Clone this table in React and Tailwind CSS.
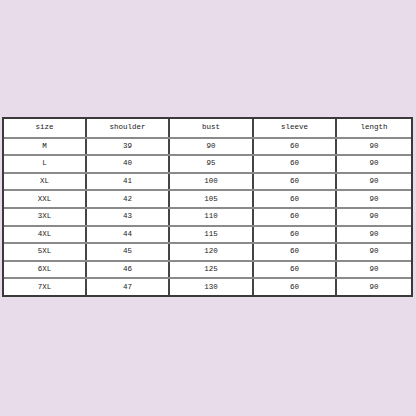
const header = ["size", "shoulder", "bust", "sleeve", "length"];

const rows = [
  ["M", "39", "90", "60", "90"],
  ["L", "40", "95", "60", "90"],
  ["XL", "41", "100", "60", "90"],
  ["XXL", "42", "105", "60", "90"],
  ["3XL", "43", "110", "60", "90"],
  ["4XL", "44", "115", "60", "90"],
  ["5XL", "45", "120", "60", "90"],
  ["6XL", "46", "125", "60", "90"],
  ["7XL", "47", "130", "60", "90"],
];

export default function App() {
  return (
    <div className="w-[416px] h-[416px] bg-[#e8dcea] pt-[117px] px-[2px] font-['Liberation_Mono',monospace]">
      <div className="w-[411px] border-2 border-[#3a3a3a] bg-white">
        {[header, ...rows].map((row, i) => (
          <div
            key={i}
            className={`grid grid-cols-[81px_83px_84px_83px_1fr] h-[17.6px] ${i > 0 ? "border-t-2 border-[#8a8a8a]" : ""}`}
          >
            {row.map((cell, j) => (
              <div
                key={j}
                className={`flex items-center justify-center text-[7.5px] text-[#1a1a1a] ${j > 0 ? "border-l-2 border-[#444]" : ""}`}
              >
                {cell}
              </div>
            ))}
          </div>
        ))}
      </div>
    </div>
  );
}
